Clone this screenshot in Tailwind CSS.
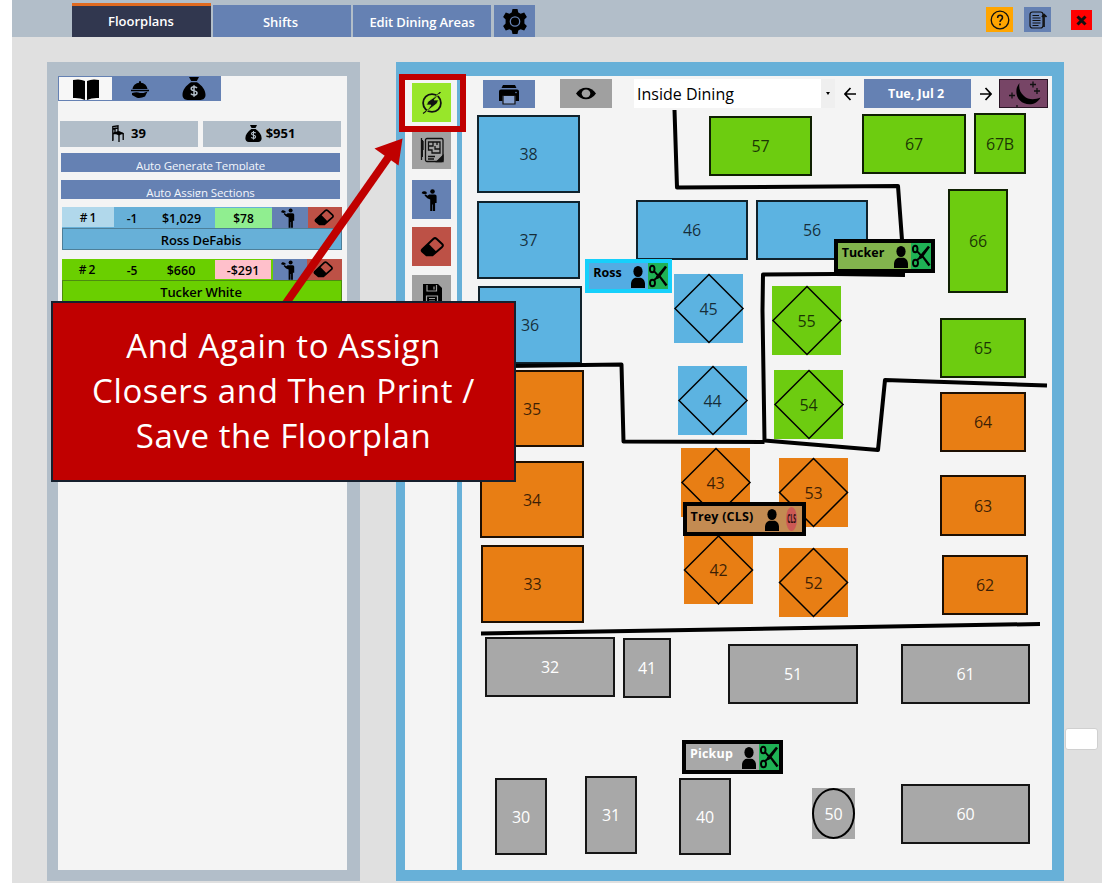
<!DOCTYPE html>
<html lang="en">
<head>
<meta charset="utf-8">
<title>Floorplans</title>
<script src="https://cdn.jsdelivr.net/npm/@tailwindcss/browser@4"></script>
</head>
<body class="w-[1114px] h-[883px] overflow-hidden bg-white font-['Open_Sans','Noto_Sans',sans-serif] text-black relative">

<svg class="hidden">
  <symbol id="bag" viewBox="0 0 24 24" preserveAspectRatio="none"><path d="M7 0h10l-2.200 4.200H9.200z"/><path d="M9 5.600h6c5 3.400 8.500 8 8.500 13 0 3.400-2 5.400-5 5.400h-13c-3 0-5-2-5-5.400 0-5 3.500-9.600 8.500-13z"/><path d="M15 11.500c-.7-1-1.800-1.300-3-1.300-1.700 0-2.800.8-2.800 2.100 0 3 5.800 1.400 5.800 4.300 0 1.400-1.300 2.200-3 2.200-1.400 0-2.500-.5-3.100-1.500M12 8.500v12" fill="none" stroke="#b2bec9" stroke-width="1.500"/></symbol>
  <symbol id="server" viewBox="0 0 16 22"><circle cx="11" cy="2.500" r="2.300"/><path d="M7.600 5.500h5.600c1.300 0 1.900.8 1.900 2V14h-1.500v8h-2.100v-6.500h-.6V22H8.700V10.500L5.800 9.300 3 6.500l1-1.200 2 1.400zM.200 4.300C.4 2.600 1.700 1.900 3 2.300c1.300-.1 2.300.7 2.500 2.200l-2.700.7z"/></symbol>
  <symbol id="eraser" viewBox="0 0 24 20"><path d="M2.200 12.500L13.500 1.700q1.500-1.200 3 0l5.600 5.200q1.500 1.500 0 3L12.500 18.200H6.500L2.200 14.600q-1-1 0-2.100z" fill="none" stroke="#000" stroke-width="2"/><path d="M2 12.500L8.300 6.500l8.200 8.200-4 3.800H6.500L2 14.600z"/></symbol>
  <symbol id="person" viewBox="0 0 14 22" preserveAspectRatio="none"><ellipse cx="7" cy="5.500" rx="4.600" ry="5.500"/><path d="M0 22v-4c0-4 2.500-6.300 5-6.300h4c2.500 0 5 2.300 5 6.300v4z"/></symbol>
  <symbol id="scissors" viewBox="0 0 20 24" preserveAspectRatio="none"><g fill="none" stroke="#000" stroke-width="1.900"><ellipse cx="4.200" cy="5.500" rx="2.300" ry="3"/><ellipse cx="4.500" cy="18.500" rx="2.500" ry="3"/><path d="M6 7.500l4 4M6 16l4-3.500"/></g><path d="M8 12.500L17 2.500l2 1.500-8 10-2.500 1zM8.500 10l3 .5 8 9.500-2 1.500z"/></symbol>
</svg>

<div class="ml-3 w-[1090px] h-[883px] bg-[#e0e0e0] flex flex-col">
  <!-- top bar -->
  <header class="h-[37px] shrink-0 bg-[#b2bec9] flex items-end pl-[60px] pr-[10px] text-white font-semibold text-[13px]">
    <div class="w-[139px] h-[34px] bg-[#31374f] border-t-3 border-[#e06a20] flex items-center justify-center pr-px pt-px">Floorplans</div>
    <div class="w-[138px] h-[32px] ml-[2px] bg-[#6581b3] flex items-center justify-center pt-[3px] pr-[3px]">Shifts</div>
    <div class="w-[138px] h-[32px] ml-[2px] bg-[#6581b3] flex items-center justify-center pt-[3px] whitespace-nowrap tracking-[-0.1px]">Edit Dining Areas</div>
    <div class="w-[41px] h-[32px] ml-[3px] bg-[#6581b3] flex items-center justify-center">
      <svg class="w-[26px] h-[27px]" viewBox="0 0 26 26"><path d="M10.500.5h5l.8 3.500 2.300 1.200 3.600-1.200 2.700 4.500-2.500 2.600v3.800l2.500 2.600-2.700 4.500-3.600-1.200-2.300 1.200-.8 3.500h-5L9.700 22l-2.300-1.200L3.800 22l-2.700-4.500 2.500-2.600v-3.800L1.100 8.500 3.800 4l3.600 1.200L9.700 4z"/><circle cx="13" cy="13" r="4.700" fill="none" stroke="#6581b3" stroke-width="1.300"/></svg>
    </div>
    <div class="ml-auto flex items-start h-[30px]">
      <div class="w-[27px] h-[25px] bg-[#ffa500] flex items-center justify-center"><svg class="w-[20px] h-[20px]" viewBox="0 0 20 20" fill="none" stroke="#111"><circle cx="10" cy="10" r="8.800" stroke-width="1.300"/><path d="M7.600 8c0-1.700 1-2.700 2.500-2.700S12.500 6.300 12.500 7.700c0 1.900-2.500 2-2.500 4.300" stroke-width="1.500"/><path d="M10 13.500v1.800" stroke-width="1.800"/></svg></div>
      <div class="ml-[11px] w-[27px] h-[25px] bg-[#6581b3] flex items-center justify-center"><svg class="w-[18px] h-[18px]" viewBox="0 0 18 18" fill="none" stroke="#111" stroke-width="1.200"><rect x="1" y="1" width="13" height="16" rx="2.500"/><path d="M3.500 4.500h6.500M3.500 7h8M3.500 9.500h8M3.500 12h8M3.500 14.500h6"/><path d="M15 16V4M13 6l2-2.500L17.500 6" stroke-width="1.700"/></svg></div>
      <div class="ml-[20px] mt-[3px] w-[21px] h-[20px] bg-[#ff0000] flex items-center justify-center"><svg class="w-[11px] h-[11px]" viewBox="0 0 11 11"><path d="M1.500 1.500l8 8M9.500 1.500l-8 8" stroke="#111" stroke-width="3"/></svg></div>
    </div>
  </header>

  <main class="flex pt-[25px] pl-[35px]">
    <!-- sections panel -->
    <section class="w-[313px] h-[819px] bg-[#b2bec9] pt-[15px] pl-[11px] pr-[13px] pb-[11px] shrink-0">
      <div class="h-[794px] bg-[#f4f4f4] -mt-px">
        <div class="w-[163px] h-[25px] bg-[#6581b3] p-px flex">
          <div class="w-[53px] bg-[#f7f7f7] flex justify-center items-center"><svg class="w-[26px] h-[21px] mt-[2px]" viewBox="0 0 26 21"><path d="M0 1Q7-.5 12 2v19Q7 18.500 0 19zM26 1q-7-1.500-12 1v19q5-2.500 12-2z"/></svg></div>
          <div class="w-[54px] flex justify-center items-center"><svg class="w-[18px] h-[17px] ml-[2px] mt-px" viewBox="0 0 18 17"><path d="M1.500 8C2 4.500 5 2 8 1.800V.3h2v1.500c3 .2 6 2.700 6.500 6.200zM0 8.800h18v1.400H0zM1 12q5-1.500 8 0h3.500l4-1.500-2.500 5q-4 2-8 1.300L1 14z"/></svg></div>
          <div class="w-[54px] flex justify-center items-center"><svg class="w-[24px] h-[23px] ml-px"><use href="#bag"/></svg></div>
        </div>
        <div class="flex gap-[5px] pl-[2px] mt-[20px] font-bold text-[13px]">
          <div class="w-[138px] h-[26px] bg-[#b2bec9] flex items-center justify-center gap-[7px]"><svg class="w-[12px] h-[17px] -mt-[2px]" viewBox="0 0 12 17"><path d="M.8 16V1.500L6 .8v6.500M1 4l4.500-1M3 2.500v6M1 8.500h10M1 8.500V15M7 9v8M11.200 8v7" fill="none" stroke="#000" stroke-width="1.300"/><path d="M1 7.500l6-1.500 4.500 2L7 10.500z"/></svg>39</div>
          <div class="w-[138px] h-[26px] bg-[#b2bec9] flex items-center justify-center gap-[4px] pr-[4px]"><svg class="w-[17px] h-[17px] -mt-px"><use href="#bag"/></svg>$951</div>
        </div>
        <div class="ml-[3px] mt-[6px] w-[279px] h-[19px] bg-[#6581b3] text-[#f2f5fb] text-[11.500px] flex justify-center"><span class="block h-[17px] pt-[4px] overflow-hidden leading-[18px] tracking-[-0.12px]">Auto Generate Template</span></div>
        <div class="ml-[3px] mt-[8px] w-[279px] h-[19px] bg-[#6581b3] text-[#f2f5fb] text-[11.500px] flex justify-center"><span class="block h-[17px] pt-[4px] overflow-hidden leading-[18px] tracking-[-0.1px]">Auto Assign Sections</span></div>

        <div class="ml-[4px] mt-[8px] w-[280px] text-[12px] font-semibold">
          <div class="h-[21px] bg-[#67b0d8] flex leading-[24px] text-center">
            <div class="w-[52px] h-[20px] bg-[#b1d8eb] leading-[22px]">#&thinsp;1</div><div class="w-[36px]">-1</div><div class="w-[63px] text-[12.500px]">$1,029</div>
            <div class="w-[57px] h-[20px] ml-[2px] mt-px bg-[#90ee90] leading-[22px]">$78</div>
            <div class="w-[36px] bg-[#6581b3] flex justify-center items-center pr-1"><svg class="w-[14px] h-[20px]"><use href="#server"/></svg></div>
            <div class="grow bg-[#bd5146] flex justify-center items-center pr-[3px]"><svg class="w-[20px] h-[17px]"><use href="#eraser"/></svg></div>
          </div>
          <div class="h-[22px] bg-[#67b0d8] border border-[#4d7f99] text-[13px] leading-[22px] text-center tracking-[-0.1px]"><span class="-ml-[2px]">Ross DeFabis</span></div>
          <div class="mt-[9px] h-[21px] bg-[#6acf00] flex leading-[24px] text-center">
            <div class="w-[50px] leading-[22px]">#&thinsp;2</div><div class="w-[40px]">-5</div><div class="w-[58px] text-[12.500px]">$660</div>
            <div class="w-[56px] h-[19px] ml-[5px] mt-px bg-[#ffc0cb] leading-[22px] text-[12.500px]">-$291</div>
            <div class="w-[34px] ml-[2px] bg-[#6581b3] flex justify-center items-center pr-1"><svg class="w-[14px] h-[20px]"><use href="#server"/></svg></div>
            <div class="grow bg-[#bd5146] flex justify-center items-center pr-[3px]"><svg class="w-[20px] h-[17px]"><use href="#eraser"/></svg></div>
          </div>
          <div class="h-[22px] bg-[#6acf00] border border-[#4d8c10] text-[13px] leading-[22px] text-center tracking-[-0.1px]"><span class="-ml-[2px]">Tucker White</span></div>
        </div>
      </div>
    </section>

    <!-- floorplan panel -->
    <section class="ml-[36px] w-[668px] h-[819px] bg-[#67b0d8] pt-[14px] pl-[9px] pr-[12px] pb-[11px] flex gap-[5px] shrink-0">
      <div class="w-[52px] bg-[#f4f4f4] pl-[7px] pt-[7px] flex flex-col">
        <div class="w-[39px] h-[39px] bg-[#98e62a] flex items-center justify-center"><svg class="w-[22px] h-[22px]" viewBox="0 0 22 22" fill="none" stroke="#111" stroke-width="1.800"><circle cx="11" cy="11" r="8.900"/><path d="M19.500 0L14 5M8 17L2 21.500" stroke-width="1.100"/><path d="M18 2L7 9.500 5.500 13h4.500L5.500 19.500l10.500-8 1.500-3.500h-4.500z" fill="#111" stroke="#98e62a" stroke-width=".7"/></svg></div>
        <div class="mt-[9px] w-[39px] h-[38px] bg-[#a0a0a0] flex items-center justify-center"><svg class="w-[24px] h-[26px]" viewBox="0 0 24 26" fill="none" stroke="#111" stroke-width="1.300"><rect x="5.500" y="1.500" width="17.500" height="23" rx="1.500"/><path d="M8.500 5h11.500v11H12v-3H8.500zM13 5v4h-4.500M15 9v3h5M17 5v3M8 19.500h7M8 22h6M1.500 1v22M3 4v9"/><path d="M17 24.500l6-6v6z" fill="#111"/><path d="M2 3v17" stroke-width="2"/></svg></div>
        <div class="mt-[11px] w-[39px] h-[39px] bg-[#6581b3] flex items-center justify-center"><svg class="w-[17px] h-[22px] -ml-1 mt-px"><use href="#server"/></svg></div>
        <div class="mt-[8px] w-[39px] h-[39px] bg-[#bd5146] flex items-center justify-center"><svg class="w-[24px] h-[20px]"><use href="#eraser"/></svg></div>
        <div class="mt-[9px] w-[39px] h-[39px] bg-[#a0a0a0] flex items-center justify-center"><svg class="w-[20px] h-[22px]" viewBox="0 0 20 22"><path d="M1 0h15l4 4v18H1z"/><path d="M5 1v6h9.500V1M12 2.500v3M4.500 22V12h11v10M7 14.500h6M7 17h6" fill="none" stroke="#a0a0a0" stroke-width="1.200"/></svg></div>
      </div>
      <div class="grow bg-[#f4f4f4] flex flex-col">
        <div class="h-[34px] shrink-0 pt-[3px] pl-[21px] flex items-start">
          <div class="mt-px w-[52px] h-[28px] bg-[#6581b3] flex items-center justify-center"><svg class="w-[20px] h-[20px] mt-px" viewBox="0 0 20 20"><path d="M4 0h12l1.500 3h-15zM2 4.500h16q2 0 2 2V16h-3.500V11h-13v5H0V6.500q0-2 2-2z"/><path d="M4 10.500h12V19H4z" fill="#87a0cd" stroke="#111" stroke-width="1.200"/><circle cx="17" cy="7.500" r=".8" fill="#6581b3"/></svg></div>
          <div class="ml-[25px] w-[52px] h-[29px] bg-[#a0a0a0] flex items-center justify-center"><svg class="w-[20px] h-[13px]" viewBox="0 0 20 14" preserveAspectRatio="none"><path d="M0 7Q4 .8 10 .8T20 7q-4 6.200-10 6.200T0 7z"/><circle cx="10" cy="7" r="4.300" fill="#a0a0a0"/></svg></div>
          <div class="ml-[22px] w-[201px] h-[29px] bg-white flex items-stretch text-[16px] leading-[30px] pl-[3px]"><span>Inside Dining</span><div class="ml-auto w-[14px] bg-[#efefef] flex items-center justify-center"><div class="border-x-[2.500px] border-x-transparent border-t-[3px] border-t-black"></div></div></div>
          <svg class="ml-[9px] mt-[8px] w-[12px] h-[14px]" viewBox="0 0 12 14" fill="none" stroke="#000" stroke-width="1.700"><path d="M12 7H1M6.500 1L1 7l5.500 6"/></svg>
          <div class="ml-[8px] w-[107px] h-[29px] bg-[#6581b3] text-white font-bold text-[12.500px] flex items-center justify-center pt-[2px] pr-[3px]">Tue, Jul 2</div>
          <svg class="ml-[9px] mt-[8px] w-[12px] h-[14px]" viewBox="0 0 12 14" fill="none" stroke="#000" stroke-width="1.700"><path d="M0 7h11M5.500 1L11 7l-5.500 6"/></svg>
          <div class="ml-[7px] w-[49px] h-[29px] bg-[#774566] border border-[#2a1525]"><svg class="w-[47px] h-[27px]" viewBox="0 0 47 27"><path d="M19.500 3C15 8 15.500 16 20 20.500c5.500 5.500 16 5.500 20.500-3C35 20 28 20 24 16c-4-3.500-5.500-8-4.500-13z"/><path d="M33 1.500v6M30 4.500h6M37 8v6M34 11h6M12 12.500v6M9 15.500h6M17 25v2" stroke="#111" stroke-width="1.300"/></svg></div>
        </div>
        <!-- free canvas; children are placed in window coordinates -->
        <div class="grow relative">
          <div class="absolute -left-[462px] -top-[110px] w-[1052px] h-[870px] text-[16px] tracking-[-0.2px] text-black/75 *:absolute [&>div]:flex [&>div]:items-center [&>div]:justify-center">
            <div class="left-[477px] top-[115px] w-[103px] h-[78px] bg-[#5cb3e1] border-2 border-[#10222c]">38</div>
            <div class="left-[477px] top-[201px] w-[103px] h-[78px] bg-[#5cb3e1] border-2 border-[#10222c]">37</div>
            <div class="left-[478px] top-[286px] w-[104px] h-[78px] bg-[#5cb3e1] border-2 border-[#10222c]">36</div>
            <div class="left-[636px] top-[200px] w-[112px] h-[60px] bg-[#5cb3e1] border-2 border-[#10222c]">46</div>
            <div class="left-[756px] top-[200px] w-[112px] h-[60px] bg-[#5cb3e1] border-2 border-[#10222c]">56</div>
            <div class="left-[480px] top-[370px] w-[104px] h-[77px] bg-[#e87e14] border-2 border-[#1d0f02]">35</div>
            <div class="left-[480px] top-[461px] w-[104px] h-[77px] bg-[#e87e14] border-2 border-[#1d0f02]">34</div>
            <div class="left-[481px] top-[545px] w-[103px] h-[78px] bg-[#e87e14] border-2 border-[#1d0f02]">33</div>
            <div class="left-[940px] top-[392px] w-[86px] h-[60px] bg-[#e87e14] border-2 border-[#1d0f02]">64</div>
            <div class="left-[940px] top-[475px] w-[86px] h-[61px] bg-[#e87e14] border-2 border-[#1d0f02]">63</div>
            <div class="left-[942px] top-[555px] w-[86px] h-[60px] bg-[#e87e14] border-2 border-[#1d0f02]">62</div>
            <div class="left-[709px] top-[116px] w-[103px] h-[60px] bg-[#6dcc10] border-2 border-[#0f2002]">57</div>
            <div class="left-[862px] top-[114px] w-[104px] h-[60px] bg-[#6dcc10] border-2 border-[#0f2002]">67</div>
            <div class="left-[974px] top-[113px] w-[52px] h-[61px] bg-[#6dcc10] border-2 border-[#0f2002]">67B</div>
            <div class="left-[948px] top-[189px] w-[60px] h-[104px] bg-[#6dcc10] border-2 border-[#0f2002]">66</div>
            <div class="left-[940px] top-[318px] w-[86px] h-[60px] bg-[#6dcc10] border-2 border-[#0f2002]">65</div>

            <div class="left-[485px] top-[637px] w-[130px] h-[60px] bg-[#a8a8a8] border-2 border-[#151515] text-white">32</div>
            <div class="left-[623px] top-[638px] w-[48px] h-[60px] bg-[#a8a8a8] border-2 border-[#151515] text-white">41</div>
            <div class="left-[728px] top-[644px] w-[130px] h-[60px] bg-[#a8a8a8] border-2 border-[#151515] text-white">51</div>
            <div class="left-[901px] top-[644px] w-[129px] h-[60px] bg-[#a8a8a8] border-2 border-[#151515] text-white">61</div>
            <div class="left-[495px] top-[778px] w-[52px] h-[77px] bg-[#a8a8a8] border-2 border-[#151515] text-white">30</div>
            <div class="left-[585px] top-[776px] w-[52px] h-[78px] bg-[#a8a8a8] border-2 border-[#151515] text-white">31</div>
            <div class="left-[679px] top-[778px] w-[52px] h-[77px] bg-[#a8a8a8] border-2 border-[#151515] text-white">40</div>
            <div class="left-[901px] top-[784px] w-[129px] h-[60px] bg-[#a8a8a8] border-2 border-[#151515] text-white">60</div>
            <div class="left-[812px] top-[788px] w-[43px] h-[51px] bg-[#a8a8a8] text-white"><span class="size-full rounded-[50%] border-2 border-black flex items-center justify-center">50</span></div>

            <div class="left-[674px] top-[274px] size-[69px] bg-[#5cb3e1]">45</div>
            <div class="left-[678px] top-[366px] size-[69px] bg-[#5cb3e1]">44</div>
            <div class="left-[772px] top-[286px] size-[69px] bg-[#6dcc10]">55</div>
            <div class="left-[774px] top-[370px] size-[69px] bg-[#6dcc10]">54</div>
            <div class="left-[681px] top-[448px] size-[69px] bg-[#e87e14]">43</div>
            <div class="left-[779px] top-[458px] size-[69px] bg-[#e87e14]">53</div>
            <div class="left-[684px] top-[535px] size-[69px] bg-[#e87e14]">42</div>
            <div class="left-[779px] top-[548px] size-[69px] bg-[#e87e14]">52</div>

            <svg class="left-0 top-0 w-[1060px] h-[870px]" viewBox="0 0 1060 870" fill="none" stroke="#000">
              <g stroke-width="1.500">
                <path d="M709 274.500l34 34-34 34-34-34z"/><path d="M713 366.500l34 34-34 34-34-34z"/>
                <path d="M807 286.500l34 34-34 34-34-34z"/><path d="M809 370.500l34 34-34 34-34-34z"/>
                <path d="M716 448.500l34 34-34 34-34-34z"/><path d="M813.500 458.500l34 34-34 34-34-34z"/>
                <path d="M718.500 536l34 34-34 34-34-34z"/><path d="M813.500 548.500l34 34-34 34-34-34z"/>
              </g>
              <g stroke-width="4" stroke-linejoin="round">
                <path d="M674.500 110l2.500 77.500 221-1.500 4 54"/>
                <path d="M905 275l-70-1-72 .5-.5 36 2 130 113.500 9.500 7-70 162 5.500"/>
                <path d="M500 366l121.500-1.500 2 77 141 .5"/>
                <path d="M481 633.500l559-9.500"/>
              </g>
            </svg>

            <div class="left-[585px] top-[259px] w-[87px] h-[34px] bg-[#53ace3] border-4 border-[#16d0fb] text-black font-bold text-[12.500px] tracking-normal"><span class="w-[37px] text-center pb-[5px]">Ross</span><svg class="ml-[5px] mt-[1px] w-[14px] h-[22px]"><use href="#person"/></svg><svg class="ml-[3px] bg-[#1fb255] w-[20px] h-[26px]"><use href="#scissors"/></svg></div>
            <div class="left-[834px] top-[239px] w-[101px] h-[34px] bg-[#82b44d] border-4 border-black text-black font-bold text-[12.500px] tracking-normal"><span class="w-[49px] text-center pb-[5px]">Tucker</span><svg class="ml-[6px] mt-px w-[14px] h-[22px]"><use href="#person"/></svg><svg class="ml-[3px] bg-[#1fb255] w-[20px] h-[26px]"><use href="#scissors"/></svg></div>
            <div class="left-[683px] top-[502px] w-[123px] h-[34px] bg-[#c38b52] border-4 border-black text-black font-bold text-[12.500px] tracking-[0.2px]"><span class="w-[70px] text-center pb-[3px] whitespace-nowrap">Trey (CLS)</span><svg class="ml-[8px] mt-[1px] w-[14px] h-[22px]"><use href="#person"/></svg><span class="ml-[7px] mr-[5px] w-[11px] h-[24px] rounded-[50%] bg-[#cc5a55] flex items-center justify-center shrink-0"><span class="inline-block scale-x-[.52] scale-y-[1.35] text-[9.500px] text-[#2a0d0d]">CLS</span></span></div>
            <div class="left-[682px] top-[740px] w-[101px] h-[34px] bg-[#a8a8a8] border-4 border-black text-white font-bold text-[12.500px] tracking-[0.2px]"><span class="w-[50px] text-center pb-[5px]">Pickup</span><svg class="ml-[5px] mt-[1px] w-[14px] h-[22px]"><use href="#person"/></svg><svg class="ml-[3px] bg-[#1fb255] w-[20px] h-[26px]"><use href="#scissors"/></svg></div>
          </div>
        </div>
      </div>
    </section>
    <div class="mt-[666px] ml-px w-[33px] h-[22px] rounded-[3px] bg-white border border-[#d0d0d0]"></div>
  </main>
</div>

<!-- annotation overlay -->
<svg class="absolute left-0 top-0 w-[520px] h-[320px]" viewBox="0 0 520 320"><path d="M284 306L390 155" stroke="#c00000" stroke-width="8"/><path d="M402.500 138.500L398.500 165.500 374.500 148.500z" fill="#c00000"/></svg>
<div class="absolute left-[399px] top-[74px] w-[67px] h-[58px] border-[6px] border-[#c00000]"></div>
<div class="absolute left-[51px] top-[301px] w-[465px] h-[181px] bg-[#c00000] border-2 border-[#16202e] text-white text-[33px] tracking-[0.6px] leading-[45px] text-center flex flex-col justify-center items-center whitespace-nowrap pb-[2px]">
  <div>And Again to Assign</div><div>Closers and Then Print /</div><div>Save the Floorplan</div>
</div>
</body>
</html>
